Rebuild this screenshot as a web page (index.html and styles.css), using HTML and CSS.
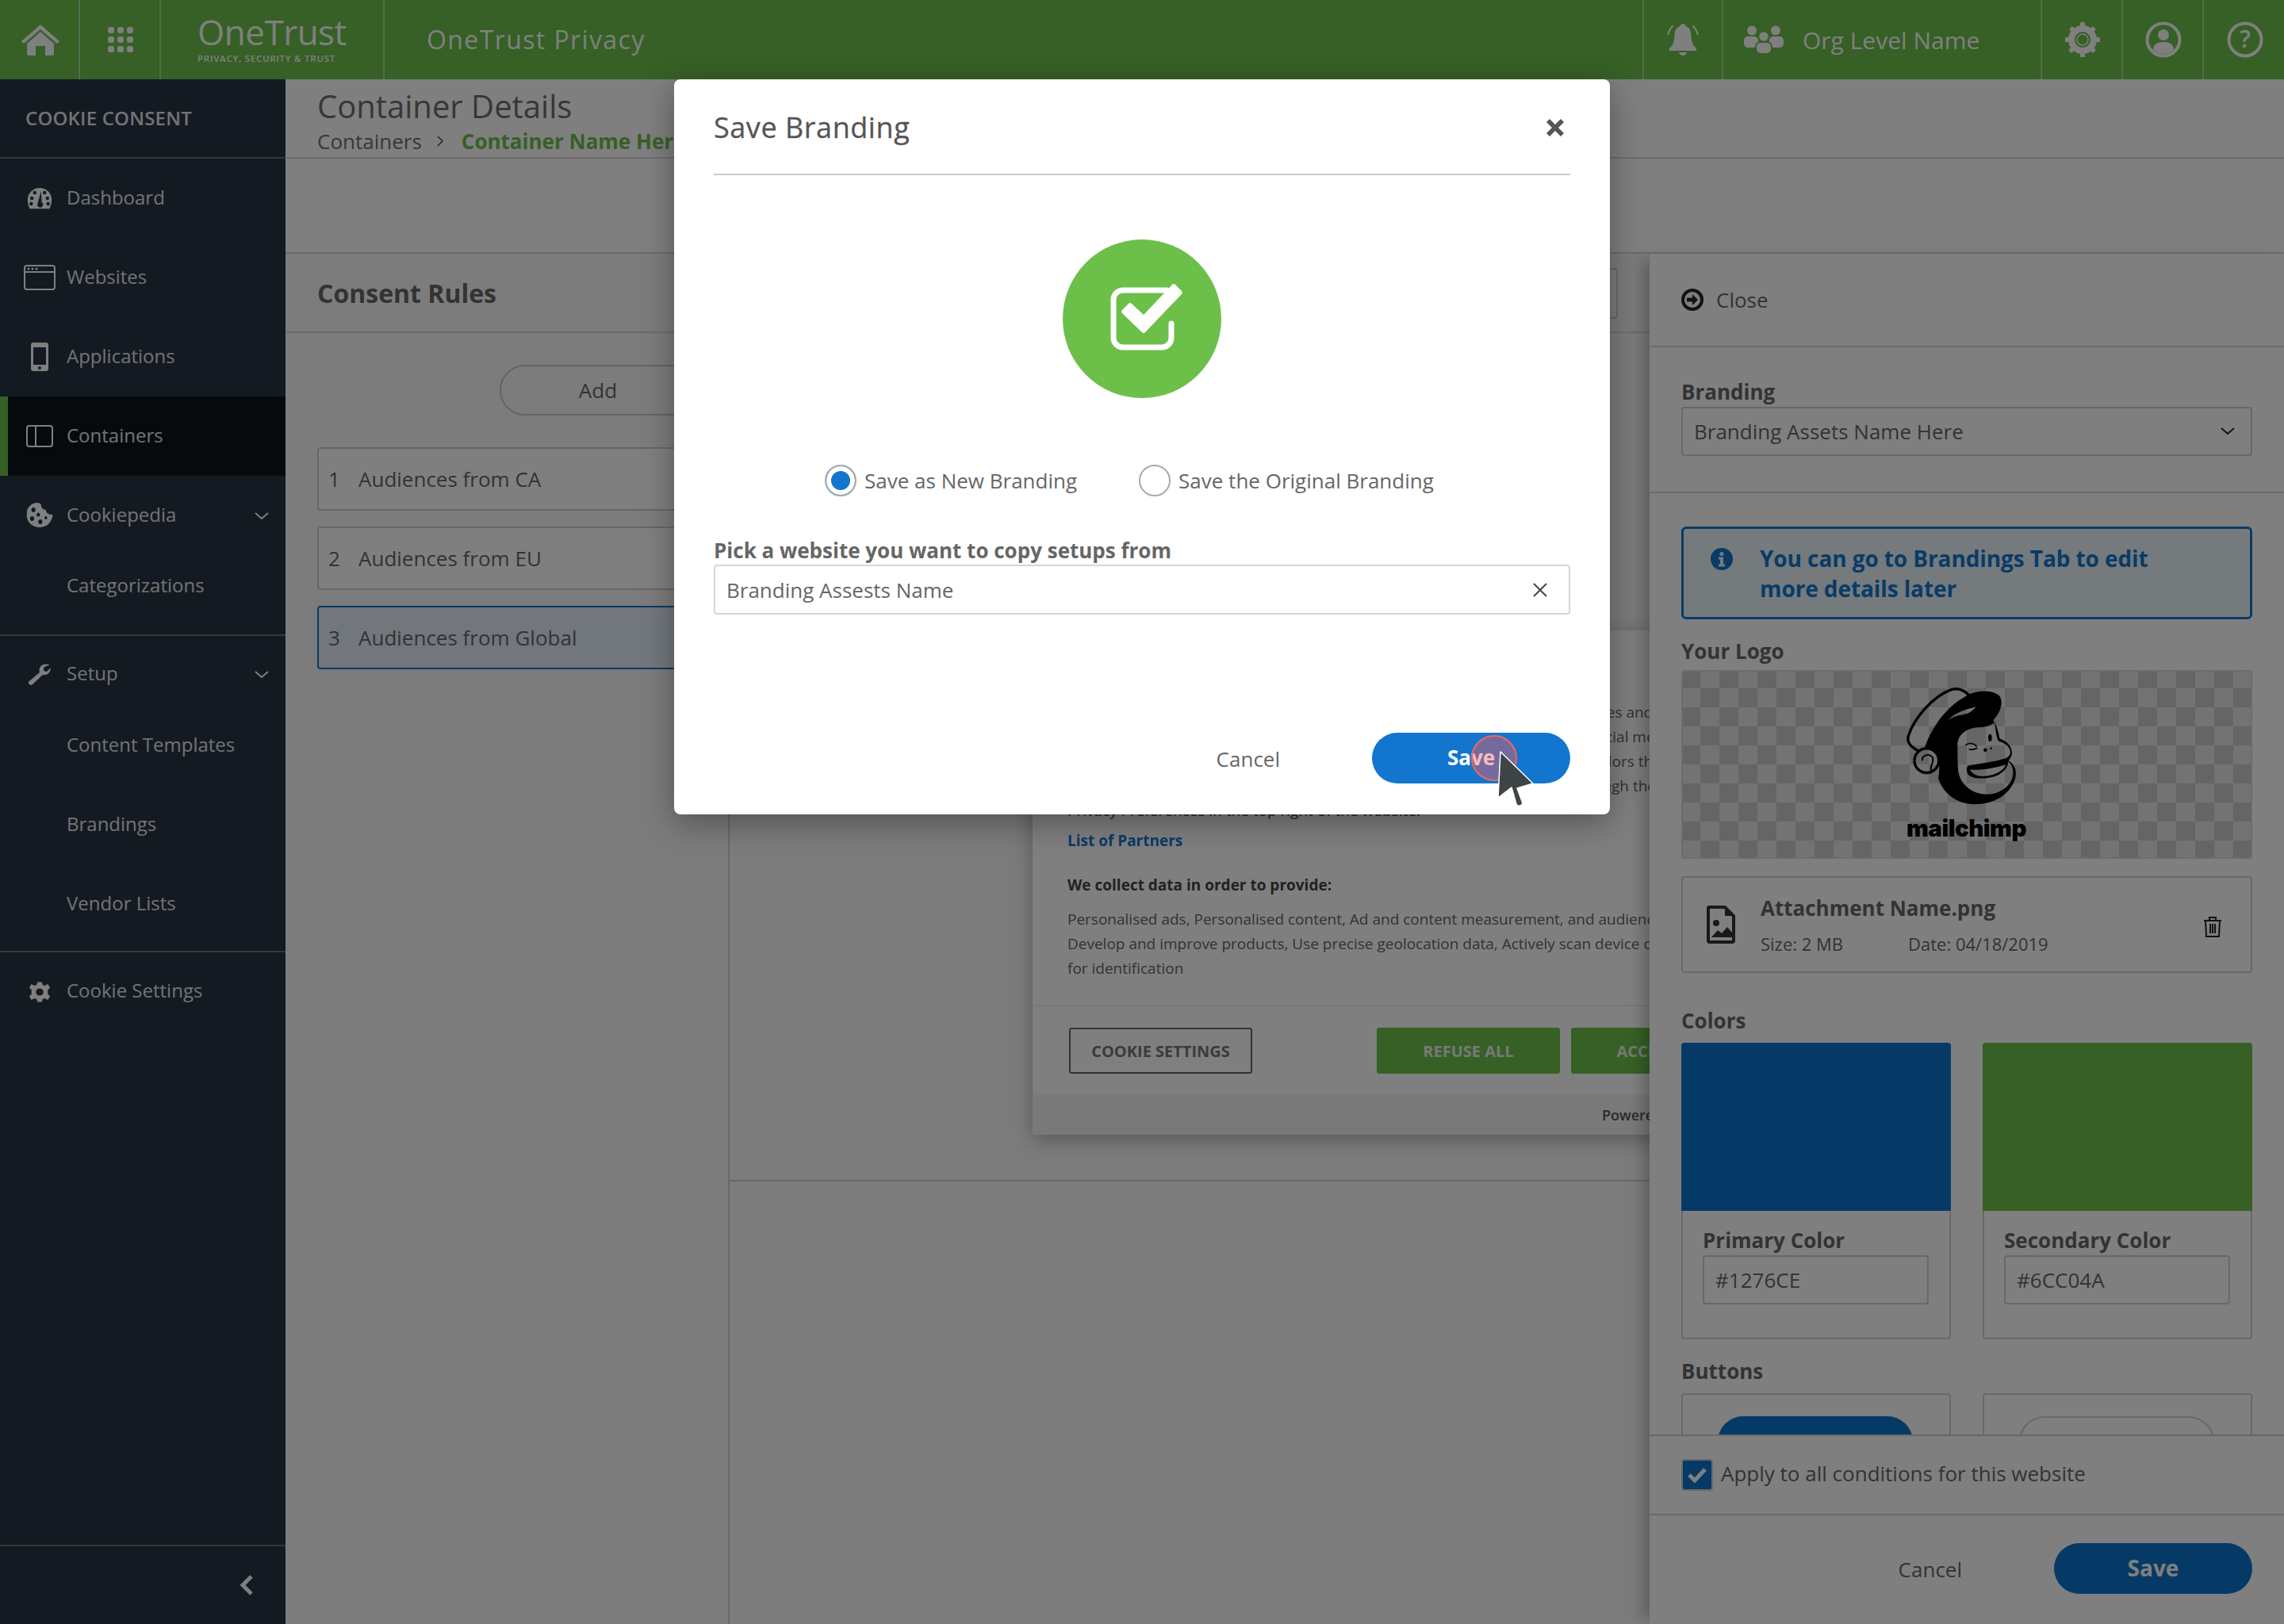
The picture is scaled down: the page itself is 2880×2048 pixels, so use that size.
FILE: index.html
```html
<!DOCTYPE html>
<html lang="en">
<head>
<meta charset="utf-8">
<title>Save Branding</title>
<link rel="stylesheet" href="styles.css">
</head>
<body>
<header class="topbar">
  <div class="tb-cell"><svg class="ic" width="52" height="40" viewBox="0 0 52 40"><path d="M26 1 2 22l3 3L26 7l21 18 3-3z" fill="#fff"/><path d="M9 25 26 10l17 15v13a2 2 0 0 1-2 2h-9V28H20v12h-9a2 2 0 0 1-2-2z" fill="#fff"/></svg></div>
  <div class="tb-cell"><svg class="ic" width="34" height="34" viewBox="0 0 34 34" fill="#fff"><rect x="1" y="1" width="8" height="8" rx="3"/><rect x="13" y="1" width="8" height="8" rx="3"/><rect x="25" y="1" width="8" height="8" rx="3"/><rect x="1" y="13" width="8" height="8" rx="3"/><rect x="13" y="13" width="8" height="8" rx="3"/><rect x="25" y="13" width="8" height="8" rx="3"/><rect x="1" y="25" width="8" height="8" rx="3"/><rect x="13" y="25" width="8" height="8" rx="3"/><rect x="25" y="25" width="8" height="8" rx="3"/></svg></div>
  <div class="tb-logo"><span class="logo-name">OneTrust</span><span class="logo-sub">PRIVACY, SECURITY &amp; TRUST</span></div>
  <div class="tb-product">OneTrust Privacy</div>
  <div class="tb-cell tb-bell"><svg class="ic" width="40" height="40" viewBox="0 0 40 40" fill="#fff"><path d="M20 0c2 0 3 1 3.500 3 5 1.500 7 6 7 12 0 7 2 12 6.500 16v3H3v-3c4.500-4 6.500-9 6.500-16 0-6 2-10.500 7-12C17 1 18 0 20 0z"/><path d="M15 36h10c-.5 2-2.500 4-5 4s-4.500-2-5-4z"/><path d="M7.500 2.500C4 6 2 10 1 14M32.500 2.500c3.500 3.500 5.500 7.500 6.500 11.500" fill="none" stroke="#fff" stroke-width="2"/></svg></div>
  <div class="tb-org"><svg class="ic" width="50" height="36" viewBox="0 0 50 36" fill="#fff"><circle cx="10" cy="6.500" r="6"/><circle cx="40" cy="6.500" r="6"/><rect x="0" y="14" width="18" height="14" rx="5"/><rect x="32" y="14" width="18" height="14" rx="5"/><circle cx="25" cy="14" r="6.500" stroke="#6cc04a" stroke-width="1.500"/><rect x="15" y="21" width="20" height="15" rx="6" stroke="#6cc04a" stroke-width="2"/></svg><span>Org Level Name</span></div>
  <div class="tb-cell"><svg class="ic" width="46" height="46" viewBox="0 0 46 46"><circle cx="23" cy="23" r="14" fill="none" stroke="#fff" stroke-width="8"/><path d="M20 1h6v7h-6zM20 38h6v7h-6zM1 20h7v6H1zM38 20h7v6h-7zM6 10l4-4 5 5-4 4zM31 35l4-4 5 5-4 4zM36 6l4 4-5 5-4-4zM10 31l4 4-5 5-4-4z" fill="#fff"/><circle cx="23" cy="23" r="7" fill="none" stroke="#fff" stroke-width="1.500"/></svg></div>
  <div class="tb-cell"><svg class="ic" width="46" height="46" viewBox="0 0 46 46"><circle cx="23" cy="23" r="20.500" fill="none" stroke="#fff" stroke-width="4"/><path d="M10 36c0-7 5-10 13-10s13 3 13 10c-3 3-8 5-13 5s-10-2-13-5z" fill="#fff"/><circle cx="23" cy="17" r="7" fill="#fff"/></svg></div>
  <div class="tb-cell"><svg class="ic" width="46" height="46" viewBox="0 0 46 46"><circle cx="23" cy="23" r="20.500" fill="none" stroke="#fff" stroke-width="4"/><text x="23" y="33" text-anchor="middle" class="qm">?</text></svg></div>
</header>

<div class="shell">
  <nav class="sidebar">
    <div class="side-head">COOKIE CONSENT</div>
    <div class="side-group">
      <a class="side-item"><svg class="side-ic" width="32" height="28" viewBox="0 0 36 32" preserveAspectRatio="none"><path d="M18 1a17 17 0 0 0-17 17c0 5 1 9 3 13h28c2-4 3-8 3-13A17 17 0 0 0 18 1z" fill="#fff"/><g fill="#283444"><circle cx="7" cy="16" r="2.500"/><circle cx="11" cy="8" r="2.500"/><circle cx="25" cy="8" r="2.500"/><circle cx="29" cy="16" r="2.500"/><circle cx="6" cy="24" r="2.500"/><circle cx="30" cy="24" r="2.500"/><path d="M20 6l1 16a4 4 0 1 1-6 2z"/></g></svg><span>Dashboard</span></a>
      <a class="side-item"><svg class="side-ic" width="40" height="32" viewBox="0 0 40 32" fill="none" stroke="#fff" stroke-width="2"><rect x="1" y="1" width="38" height="30" rx="3"/><path d="M1 9h38"/><g fill="#fff" stroke="none"><circle cx="6" cy="5" r="1.500"/><circle cx="11" cy="5" r="1.500"/><circle cx="16" cy="5" r="1.500"/></g></svg><span>Websites</span></a>
      <a class="side-item"><svg class="side-ic" width="24" height="36" viewBox="0 0 24 36"><rect x="1" y="0" width="22" height="36" rx="3" fill="#fff"/><rect x="4" y="6" width="16" height="22" fill="#283444"/><circle cx="12" cy="32" r="2" fill="#283444"/></svg><span>Applications</span></a>
      <a class="side-item is-active"><svg class="side-ic" width="34" height="28" viewBox="0 0 34 28" fill="none" stroke="#fff" stroke-width="2"><rect x="1" y="1" width="32" height="26" rx="3"/><path d="M12 1v26"/></svg><span>Containers</span></a>
    </div>
    <div class="side-group group-cookie">
      <a class="side-item"><svg class="side-ic" width="33" height="32" viewBox="0 0 38 32" preserveAspectRatio="none"><path d="M16 0c2 0 4 1 5 2 0 4 3 7 7 7 0 3 3 6 9 6 2 0 1 2 0 4-2 7-9 12-18 12C8 31 0 24 0 15 0 6 7 0 16 0z" fill="#fff"/><g fill="#283444"><circle cx="10" cy="9" r="3"/><circle cx="17" cy="15" r="2.500"/><circle cx="8" cy="20" r="3"/><circle cx="20" cy="24" r="3"/><circle cx="28" cy="19" r="2"/></g></svg><span>Cookiepedia</span><svg class="side-chev" width="18" height="10" viewBox="0 0 18 10"><path d="M1 1l8 7 8-7" fill="none" stroke="#fff" stroke-width="2"/></svg></a>
      <a class="side-sub">Categorizations</a>
    </div>
    <div class="side-group group-setup">
      <a class="side-item"><svg class="side-ic" width="30" height="29" viewBox="0 0 32 30" preserveAspectRatio="none"><path d="M31 6c0 6-5 10-11 9L6 28a3.500 3.500 0 0 1-5-4l15-12c-2-6 2-11 9-11 1 0 3 0 4 1l-7 3-1 4 4 2 6-5z" fill="#fff"/></svg><span>Setup</span><svg class="side-chev" width="18" height="10" viewBox="0 0 18 10"><path d="M1 1l8 7 8-7" fill="none" stroke="#fff" stroke-width="2"/></svg></a>
      <a class="side-sub">Content Templates</a>
      <a class="side-sub">Brandings</a>
      <a class="side-sub">Vendor Lists</a>
    </div>
    <div class="side-group group-settings">
      <a class="side-item"><svg class="side-ic" width="28" height="27" viewBox="0 0 30 30" preserveAspectRatio="none"><path d="M12 1h6l1 4 3 1 4-2 3 5-3 3v6l3 3-3 5-4-2-3 1-1 4h-6l-1-4-3-1-4 2-3-5 3-3v-6L1 9l3-5 4 2 3-1z" fill="#fff"/><circle cx="15" cy="15" r="5" fill="#283444"/></svg><span>Cookie Settings</span></a>
    </div>
    <div class="side-foot"><svg width="20" height="28" viewBox="0 0 20 28"><path d="M16 3 5 14l11 11" fill="none" stroke="#fff" stroke-width="5"/></svg></div>
  </nav>

  <main class="main">
    <div class="page-head">
      <h1>Container Details</h1>
      <div class="crumbs"><span>Containers</span><svg width="10" height="16" viewBox="0 0 10 16"><path d="M2 2l6 6-6 6" fill="none" stroke="#4a4a4a" stroke-width="1.500"/></svg><b>Container Name Here</b></div>
    </div>
    <div class="page-band"></div>
    <div class="workspace">
      <section class="rules">
        <h2 class="rules-title">Consent Rules</h2>
        <div class="rules-body">
          <div class="add-pill">Add</div>
          <div class="rule"><i>1</i>Audiences from CA</div>
          <div class="rule"><i>2</i>Audiences from EU</div>
          <div class="rule is-selected"><i>3</i>Audiences from Global</div>
        </div>
      </section>
      <section class="canvas">
        <div class="canvas-top">
          <div class="canvas-box"></div>
        </div>
        <div class="stage">
          <div class="preview">
            <div class="preview-body">
              <p class="pv-line">With your consents, we and all our partners use cookies or similar technologies and</p>
              <p class="pv-line">to store and process personal data to show you ads and then also to offer social media</p>
              <p class="pv-line">You might withdraw consents from us and our partners at any time, and vendors that</p>
              <p class="pv-line">by managing your choices with all of the options shown on this page, or through the</p>
              <p class="pv-line pv-cut">Privacy Preferences in the top right of the website.</p>
              <p class="pv-link">List of Partners</p>
              <p class="pv-bold">We collect data in order to provide:</p>
              <p class="pv-line">Personalised ads, Personalised content, Ad and content measurement, and audience insights,</p>
              <p class="pv-line">Develop and improve products, Use precise geolocation data, Actively scan device characteristics</p>
              <p class="pv-line">for identification</p>
            </div>
            <div class="preview-actions">
              <button class="pv-btn pv-outline">COOKIE SETTINGS</button>
              <button class="pv-btn pv-fill pv-refuse">REFUSE ALL</button>
              <button class="pv-btn pv-fill">ACCEPT ALL</button>
            </div>
            <div class="preview-foot">Powered by OneTrust</div>
          </div>
        </div>
      </section>
      <aside class="panel">
        <div class="panel-close"><svg width="28" height="28" viewBox="0 0 28 28"><circle cx="14" cy="14" r="12" fill="none" stroke="#000" stroke-width="4"/><path d="M7 11.500h7V7l7 7-7 7v-4.500H7z" fill="#000"/></svg><span>Close</span></div>
        <div class="panel-scroll">
          <div class="panel-branding">
            <label class="fld-label">Branding</label>
            <div class="select"><span>Branding Assets Name Here</span><svg width="18" height="10" viewBox="0 0 18 10"><path d="M1 1l8 7 8-7" fill="none" stroke="#222" stroke-width="2"/></svg></div>
          </div>
          <div class="panel-content">
            <div class="info"><svg width="28" height="28" viewBox="0 0 28 28"><circle cx="14" cy="14" r="14" fill="#1276ce"/><circle cx="14" cy="7.500" r="2.500" fill="#eaf4fb"/><path d="M10 11.500h6v9h2v3h-8v-3h2v-6h-2z" fill="#eaf4fb"/></svg><p>You can go to Brandings Tab to edit more details later</p></div>
            <label class="fld-label lbl-logo">Your Logo</label>
            <div class="checker">
              <svg class="chimp" width="150" height="157" viewBox="300 70 450 470">
                <path d="M355 320C325 305 312 285 320 262 340 200 410 115 480 90 510 80 535 95 552 115" fill="none" stroke="#000" stroke-width="10"/>
                <path fill="#000" fill-rule="evenodd" d="M540 112C575 92 640 88 665 115 680 140 665 180 640 205 655 225 660 255 665 275 695 285 715 310 710 335 708 345 703 352 698 358 720 372 732 395 722 430 700 490 640 523 570 523 500 523 450 480 432 425 438 395 438 355 425 330 412 315 395 308 380 312 400 250 450 160 540 112ZM470 205C490 180 530 165 575 155 560 172 545 182 520 185 500 188 485 195 470 205ZM505 300C505 255 545 232 590 232 615 232 635 222 645 215 650 240 650 265 660 285 690 292 708 312 704 332 700 345 690 350 670 354 630 366 580 370 545 378 538 385 538 400 545 410 560 430 620 430 660 412 680 400 695 385 697 362 712 375 720 395 712 425 695 470 640 495 590 483 545 472 515 440 508 400 505 370 505 330 505 300ZM552 392C600 395 650 385 688 373 680 395 650 412 610 417 585 420 560 410 552 392Z"/>
                <path d="M535 300C545 290 565 290 578 305M548 315C560 320 570 315 580 310" fill="none" stroke="#000" stroke-width="5"/>
                <ellipse cx="628" cy="272" rx="7" ry="14" fill="#000"/><circle cx="610" cy="318" r="7" fill="#000"/><circle cx="632" cy="312" r="4" fill="#000"/>
                <circle cx="388" cy="358" r="46" fill="none" stroke="#000" stroke-width="10"/>
                <path d="M372 358C368 340 395 328 410 345 420 360 400 375 405 395" fill="none" stroke="#000" stroke-width="6"/>
              </svg>
              <span class="chimp-word">mailchimp</span>
            </div>
            <div class="attach">
              <svg class="attach-ic" width="36" height="48" viewBox="0 0 36 48"><path d="M3 2h20l11 11v31a2 2 0 0 1-2 2H4a2 2 0 0 1-2-2V3a1 1 0 0 1 1-1z" fill="none" stroke="#000" stroke-width="4"/><path d="M23 2v11h11z" fill="#000"/><circle cx="12" cy="22" r="4" fill="#000"/><path d="M6 40l8-9 5 4 7-8 6 7v6z" fill="#000"/></svg>
              <div class="attach-main"><b>Attachment Name.png</b><div class="attach-meta"><span>Size: 2 MB</span><span>Date: 04/18/2019</span></div></div>
              <svg class="trash" width="24" height="28" viewBox="0 0 24 28" fill="none" stroke="#222" stroke-width="2"><path d="M1 6h22M8 6V2h8v4M3 6l1 20h16l1-20M9 10v12M12 10v12M15 10v12"/></svg>
            </div>
            <label class="fld-label lbl-colors">Colors</label>
            <div class="cards">
              <div class="card"><div class="swatch swatch-blue"></div><div class="card-body"><label class="fld-label">Primary Color</label><div class="hex">#1276CE</div></div></div>
              <div class="card"><div class="swatch swatch-green"></div><div class="card-body"><label class="fld-label">Secondary Color</label><div class="hex">#6CC04A</div></div></div>
            </div>
            <label class="fld-label lbl-buttons">Buttons</label>
            <div class="cards">
              <div class="card card-btn"><div class="demo demo-fill"></div></div>
              <div class="card card-btn"><div class="demo demo-line"></div></div>
            </div>
          </div>
        </div>
        <div class="panel-apply"><span class="check"><svg width="26" height="20" viewBox="0 0 26 20"><path d="M3 10l7 7L23 3" fill="none" stroke="#fff" stroke-width="5"/></svg></span><span>Apply to all conditions for this website</span></div>
        <div class="panel-actions"><span class="panel-cancel">Cancel</span><button class="panel-save">Save</button></div>
      </aside>
    </div>
  </main>
</div>

<div class="scrim"></div>

<div class="modal">
  <div class="modal-head"><h3>Save Branding</h3><svg width="22" height="22" viewBox="0 0 22 22"><path d="M4 0l7 7 7-7 4 4-7 7 7 7-4 4-7-7-7 7-4-4 7-7-7-7z" fill="#555"/></svg></div>
  <div class="modal-hero"><svg width="200" height="200" viewBox="0 0 200 200"><circle cx="100" cy="100" r="100" fill="#6cc04a"/><path d="M131 64H76a12 12 0 0 0-12 12v48a12 12 0 0 0 12 12h49a12 12 0 0 0 12-12v-18" fill="none" stroke="#fff" stroke-width="7" stroke-linecap="round"/><path d="M75 89l8-8a3 3 0 0 1 4 0l15 14 36-38a3 3 0 0 1 4 0l8 8a3 3 0 0 1 0 4l-46 48a3 3 0 0 1-4 0l-25-24a3 3 0 0 1 0-4z" fill="#fff"/></svg></div>
  <div class="radios">
    <label class="radio"><span class="dot is-on"></span>Save as New Branding</label>
    <label class="radio"><span class="dot"></span>Save the Original Branding</label>
  </div>
  <label class="modal-label">Pick a website you want to copy setups from</label>
  <div class="modal-input"><span>Branding Assests Name</span><svg width="20" height="20" viewBox="0 0 20 20"><path d="M2 2l16 16M18 2 2 18" stroke="#444" stroke-width="2" fill="none"/></svg></div>
  <div class="modal-actions"><span class="modal-cancel">Cancel</span><button class="modal-save">Save</button></div>
  <span class="click-ring"></span>
  <svg class="pointer" width="50" height="72" viewBox="0 0 50 72"><path d="M5 1 2 59l17-13 6 21c1 3 7 3 8-1l-7-19 20-6z" fill="#3f4446" stroke="#fff" stroke-width="1.500" stroke-linejoin="round"/></svg>
</div>
</body>
</html>
```
FILE: styles.css
```css
* { box-sizing: border-box; }
html, body { margin: 0; height: 100%; }
body { width: 2880px; height: 2048px; overflow: hidden; font-family: "Open Sans", "Liberation Sans", sans-serif; color: #222; background: #fff; position: relative; }
h1, h2, h3, p { margin: 0; font-weight: 400; }
button { font-family: inherit; border: 0; padding: 0; }

.topbar { height: 100px; display: flex; align-items: stretch; background: #6cc04a; color: #fff; }
.tb-cell { width: 102px; flex: none; display: flex; align-items: center; justify-content: center; padding-left: 2px; border-right: 2px solid #a8d498; }
.tb-cell:first-child { width: 101px; }
.tb-cell:last-child { border-right: 0; width: 101px; }
.qm { font: 600 30px "Open Sans", sans-serif; fill: #fff; }
.tb-logo { width: 282px; flex: none; display: flex; flex-direction: column; padding-left: 46px; border-right: 2px solid #a8d498; }
.logo-name { font-size: 44px; line-height: 56px; margin-top: 12px; letter-spacing: -.5px; }
.logo-sub { font-size: 11.500px; font-weight: 600; letter-spacing: .75px; line-height: 14px; margin-top: -1px; }
.tb-product { flex: 1; padding-left: 53px; font-size: 32px; line-height: 100px; letter-spacing: 1.400px; }
.tb-bell { border-left: 2px solid #a8d498; padding-left: 0; }
.tb-org { width: 402px; flex: none; display: flex; align-items: center; gap: 24px; padding-left: 26px; font-size: 30px; border-right: 2px solid #a8d498; }
.shell { display: flex; height: 1948px; }

.sidebar { width: 360px; flex: none; background: #283444; color: #e6e6e6; display: flex; flex-direction: column; font-size: 24px; }
.side-head { height: 100px; display: flex; align-items: center; padding: 0 0 2px 32px; font-weight: 600; letter-spacing: .2px; border-bottom: 2px solid #666e78; }
.side-item { height: 100px; display: flex; align-items: center; padding: 0 0 4px 84px; position: relative; }
.side-ic { position: absolute; left: 50px; top: 50%; transform: translate(-50%, -50%); }
.side-chev { position: absolute; right: 21px; top: 46px; }
.side-item.is-active { background: #0e151b; box-shadow: inset 10px 0 0 #6cc04a; }
.side-sub { display: block; height: 100px; padding-left: 84px; }
.group-cookie, .group-setup { border-bottom: 2px solid #666e78; }
.group-cookie .side-sub { line-height: 76px; }
.group-setup .side-item { height: 97px; padding-bottom: 5px; }
.group-setup .side-chev { top: 44px; }
.group-setup .side-sub { line-height: 79px; }
.group-settings .side-item { padding-bottom: 6px; }
.side-foot { margin-top: auto; height: 100px; border-top: 2px solid #666e78; display: flex; align-items: center; justify-content: flex-end; padding-right: 39px; }

.main { flex: 1; min-width: 0; display: flex; flex-direction: column; background: #fff; }
.page-head { height: 100px; padding-left: 40px; border-bottom: 2px solid #d8d8d8; flex: none; }
.page-head h1 { font-size: 40px; line-height: 50px; color: #6e6e6e; padding-top: 9px; height: 60px; }
.crumbs { display: flex; align-items: center; gap: 18px; font-size: 26px; line-height: 36px; color: #6e6e6e; }
.crumbs b { color: #6cc04a; font-weight: 700; margin-left: 4px; }
.page-band { height: 120px; flex: none; border-bottom: 2px solid #d8d8d8; }
.workspace { flex: 1; display: flex; min-height: 0; background: #f8f8f8; }
.rules { width: 560px; flex: none; border-right: 2px solid #d0d0d0; }
.rules-title { height: 100px; line-height: 100px; padding-left: 40px; font-size: 32px; font-weight: 700; color: #666; border-bottom: 2px solid #d8d8d8; }
.rules-body { padding: 40px 0 0 40px; display: flex; flex-direction: column; }
.add-pill { width: 248px; height: 64px; margin-left: 230px; border: 2px solid #c8c8c8; border-radius: 32px; text-align: center; line-height: 60px; font-size: 26px; color: #666; }
.rule { width: 520px; height: 80px; margin-top: 20px; border: 2px solid #cfcfcf; border-radius: 4px; display: flex; align-items: center; font-size: 26px; color: #666; background: #fff; }
.rule:nth-child(2) { margin-top: 40px; }
.rule i { font-style: normal; width: 50px; padding-left: 12px; }
.rule.is-selected { border-color: #1276ce; background: #e3eef8; }

.canvas { flex: 1; min-width: 0; display: flex; flex-direction: column; }
.canvas-top { height: 100px; border-bottom: 2px solid #d8d8d8; display: flex; justify-content: flex-end; align-items: flex-start; padding-top: 18px; padding-right: 40px; flex: none; }
.canvas-box { width: 300px; height: 64px; border: 2px solid #d0d0d0; border-radius: 4px; }
.stage { height: 1070px; flex: none; border-bottom: 2px solid #d0d0d0; padding-left: 382px; padding-top: 375px; overflow: hidden; }
.preview { width: 820px; height: 636px; background: #fff; box-shadow: 0 6px 24px rgba(0,0,0,.3); display: flex; flex-direction: column; }
.preview-body { flex: 1; padding: 88px 0 0 44px; font-size: 19px; color: #666; white-space: nowrap; overflow: hidden; }
.pv-line { line-height: 31px; }
.pv-cut { color: #444; }
.pv-link { margin-top: 10px; line-height: 24px; font-weight: 700; color: #1276ce; }
.pv-bold { margin: 32px 0 16px; line-height: 24px; font-weight: 700; color: #444; }
.preview-actions { height: 114px; flex: none; display: flex; align-items: center; padding: 0 0 0 46px; border-top: 2px solid #eee; gap: 14px; overflow: hidden; }
.pv-btn { height: 58px; width: 231px; flex: none; font-size: 20px; font-weight: 700; border-radius: 3px; }
.pv-outline { background: #fff; border: 2px solid #666; color: #777; margin-right: 143px; }
.pv-fill { background: #6cc04a; color: #f0f0f0; }
.preview-foot { height: 50px; flex: none; background: #f2f2f2; font-size: 18px; font-weight: 600; color: #555; line-height: 50px; padding-left: 718px; white-space: nowrap; overflow: hidden; }

.panel { width: 800px; flex: none; background: #fff; box-shadow: -14px 0 18px -6px rgba(0,0,0,.25); display: flex; flex-direction: column; position: relative; }
.panel-close { height: 118px; flex: none; display: flex; align-items: center; gap: 16px; padding-left: 40px; font-size: 26px; color: #666; border-bottom: 2px solid #d8d8d8; }
.panel-close svg { opacity: .85; }
.panel-scroll { flex: 1; min-height: 0; overflow: hidden; }
.panel-branding { height: 184px; padding: 37px 40px 0; border-bottom: 2px solid #d8d8d8; }
.panel-content { padding: 42px 40px 0; }
.fld-label { display: block; font-size: 26px; font-weight: 700; color: #666; line-height: 36px; }
.panel-branding .fld-label { line-height: 38px; }
.select { height: 62px; border: 2px solid #d0d0d0; border-radius: 4px; display: flex; align-items: center; justify-content: space-between; padding: 0 20px 0 14px; font-size: 26px; color: #666; }
.info { height: 117px; border: 3px solid #1276ce; border-radius: 6px; background: #eaf4fb; display: flex; padding: 18px 0 0 34px; gap: 34px; }
.info svg { margin-top: 6px; flex: none; }
.info p { font-size: 28px; font-weight: 700; line-height: 38px; letter-spacing: -.1px; color: #1276ce; width: 520px; }
.lbl-logo { margin-top: 22px; height: 42px; }
.checker { height: 238px; border: 2px solid #d8d8d8; border-radius: 4px; background: conic-gradient(#e6e6e6 25%, #cacaca 0 50%, #e6e6e6 0 75%, #cacaca 0) -2px -3px / 48px 48px; display: flex; flex-direction: column; align-items: flex-start; }
.chimp { margin: 16px 0 0 278px; flex: none; }
.chimp-word { font-family: Inter, "Open Sans", sans-serif; font-weight: 900; font-size: 29.500px; line-height: 36px; color: #000; letter-spacing: -.5px; margin: 6px 0 0 282px; }
.attach { height: 122px; margin-top: 22px; border: 2px solid #d0d0d0; border-radius: 4px; display: flex; align-items: center; padding-left: 30px; gap: 32px; position: relative; }
.attach-ic { opacity: .8; flex: none; }
.attach-main b { display: block; font-size: 26px; font-weight: 700; color: #666; line-height: 36px; }
.attach-meta { display: flex; margin-top: 12px; font-size: 22px; line-height: 30px; color: #666; }
.attach-meta span:first-child { width: 186px; }
.trash { position: absolute; right: 36px; top: 48px; }
.lbl-colors { margin-top: 42px; height: 46px; line-height: 36px; }
.cards { display: grid; grid-template-columns: 340px 340px; gap: 40px; }
.card { border: 2px solid #d0d0d0; border-radius: 4px; height: 374px; }
.swatch { height: 212px; margin: -2px -2px 0; border-radius: 4px 4px 0 0; }
.swatch-blue { background: #0c74cc; }
.swatch-green { background: #6cc04a; }
.card-body { padding: 18px 26px 0 25px; }
.card-body .fld-label { line-height: 38px; height: 38px; }
.hex { height: 62px; border: 2px solid #d0d0d0; border-radius: 4px; padding-left: 14px; line-height: 58px; font-size: 26px; color: #666; }
.lbl-buttons { margin-top: 22px; height: 46px; line-height: 36px; }
.card-btn { height: 80px; padding: 27px 26px 0 44px; }
.demo { height: 64px; border-radius: 32px; width: 246px; }
.demo-fill { background: #0c74cc; }
.demo-line { border: 2px solid #d0d0d0; }
.panel-apply { height: 102px; flex: none; border-top: 2px solid #d0d0d0; border-bottom: 2px solid #d0d0d0; background: #fff; display: flex; align-items: center; padding: 0 0 0 40px; gap: 10px; font-size: 26px; color: #666; }
.panel-apply span:last-child { padding-bottom: 4px; }
.check { width: 40px; height: 40px; background: #0c74cc; border: 2px solid #d0d0d0; border-radius: 4px; display: flex; align-items: center; justify-content: center; }
.panel-actions { height: 137px; flex: none; display: flex; align-items: flex-start; justify-content: flex-end; padding: 35px 40px 0 0; gap: 116px; background: #fff; }
.panel-cancel { font-size: 26px; line-height: 66px; color: #666; }
.panel-save { width: 250px; height: 64px; border-radius: 32px; background: #0c74cc; color: #fff; font-size: 28px; font-weight: 700; padding-bottom: 3px; }

.scrim { position: absolute; inset: 0; background: rgba(0,0,0,.5); }

.modal { position: absolute; left: 850px; top: 100px; width: 1180px; height: 927px; background: #fff; border-radius: 8px; box-shadow: 0 10px 40px rgba(0,0,0,.35); padding: 0 50px; display: flex; flex-direction: column; color: #666; }
.modal-head { height: 121px; flex: none; display: flex; align-items: center; justify-content: space-between; border-bottom: 2px solid #ccc; padding: 2px 8px 0 0; }
.modal-head h3 { font-size: 36px; font-weight: 400; letter-spacing: .55px; color: #555; -webkit-text-stroke: .3px #555; }
.modal-hero { display: flex; justify-content: center; align-items: flex-start; padding-top: 81px; flex: none; height: 365px; }
.radios { display: flex; gap: 78px; height: 40px; flex: none; margin-left: 140px; }
.radio { display: flex; align-items: center; gap: 10px; font-size: 26px; }
.dot { width: 40px; height: 40px; border-radius: 50%; border: 2px solid #aaa; flex: none; background: #fff; }
.dot.is-on { background: #1276ce; box-shadow: inset 0 0 0 6px #fff; }
.modal-label { margin-top: 50px; font-size: 26px; font-weight: 700; line-height: 36px; color: #666; flex: none; height: 36px; }
.modal-input { height: 63px; flex: none; border: 2px solid #d6d6d6; border-radius: 4px; display: flex; align-items: center; justify-content: space-between; padding: 0 26px 0 14px; font-size: 26px; }
.modal-actions { display: flex; justify-content: flex-end; align-items: flex-start; margin-top: 149px; flex: none; gap: 116px; }
.modal-cancel { line-height: 66px; font-size: 26px; }
.modal-save { width: 250px; height: 64px; border-radius: 32px; background: #1276ce; color: #fff; font-size: 26px; font-weight: 700; padding-bottom: 3px; }
.click-ring { position: absolute; left: 1005px; top: 827px; width: 58px; height: 58px; border-radius: 50%; border: 2px solid #f2665f; background: rgba(255,90,90,.42); }
.pointer { position: absolute; left: 1037px; top: 847px; }
```
